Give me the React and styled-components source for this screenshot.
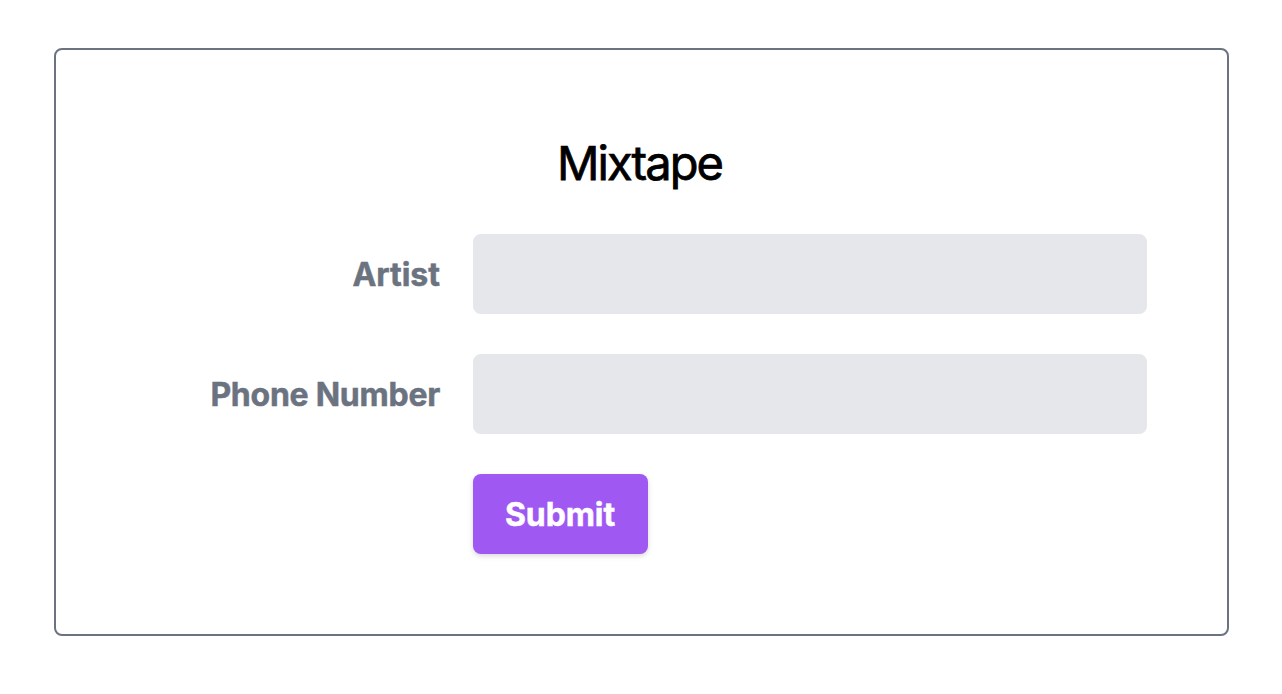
import React from 'react';
import styled, { createGlobalStyle } from 'styled-components';

const GlobalStyle = createGlobalStyle`
  *, *::before, *::after { box-sizing: border-box; }
  body {
    margin: 0;
    background: #fff;
    font-family: Inter, "Liberation Sans", sans-serif;
    font-kerning: normal;
  }
`;

const Page = styled.main`
  min-height: 694px;
  padding: 48px 53px 58px 54px;
`;

const Card = styled.section`
  height: 588px;
  padding: 77px 80px 80px;
  border: 2px solid #6b7280;
  border-radius: 8px;
`;

const Title = styled.h1`
  margin: 0 0 35px;
  padding-right: 4px;
  font-size: 47px;
  line-height: 72px;
  font-weight: 400;
  letter-spacing: -1.95px;
  text-align: center;
  color: #000;
  -webkit-text-stroke: 0.75px currentColor;
`;

const Form = styled.form`
  display: flex;
  flex-direction: column;
  gap: 40px;
`;

const Row = styled.div`
  display: grid;
  grid-template-columns: 337px 674px;
  align-items: center;
`;

const Label = styled.label`
  padding: 2px 33px 0 0;
  font-size: 32px;
  line-height: 48px;
  font-weight: 700;
  letter-spacing: ${({ $tracking }) => $tracking};
  text-align: right;
  white-space: nowrap;
  color: #6b7280;
  -webkit-text-stroke: 0.5px currentColor;
`;

const Field = styled.input`
  width: 100%;
  height: 80px;
  padding: 16px 32px;
  border: 4px solid #e5e7eb;
  border-radius: 8px;
  background: #e5e7eb;
  font: inherit;
  font-size: 32px;
  outline: none;
`;

const Submit = styled.button`
  grid-column: 2;
  justify-self: start;
  width: 175px;
  height: 80px;
  padding: 2px 1px 0 0;
  border: 0;
  border-radius: 8px;
  background: #9f58f2;
  box-shadow: 0 2px 6px rgba(0, 0, 0, 0.1), 0 2px 4px rgba(0, 0, 0, 0.06);
  color: #fff;
  font: inherit;
  font-size: 32px;
  line-height: 48px;
  font-weight: 700;
  letter-spacing: -0.1px;
  -webkit-text-stroke: 0.5px currentColor;
`;

export default function App() {
  return (
    <>
      <GlobalStyle />
      <Page>
        <Card>
          <Title>Mixtape</Title>
          <Form>
            <Row>
              <Label htmlFor="artist" $tracking="0px">Artist</Label>
              <Field id="artist" type="text" />
            </Row>
            <Row>
              <Label htmlFor="phone" $tracking="-0.25px">Phone Number</Label>
              <Field id="phone" type="text" />
            </Row>
            <Row>
              <Submit type="button">Submit</Submit>
            </Row>
          </Form>
        </Card>
      </Page>
    </>
  );
}
